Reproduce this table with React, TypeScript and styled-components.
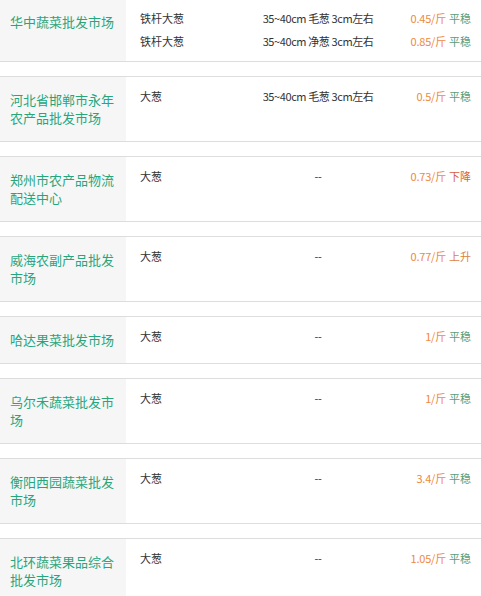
import styled, { createGlobalStyle } from 'styled-components';

const GlobalStyle = createGlobalStyle`
  body {
    margin: 0;
    background: #fff;
    font-family: "Noto Sans CJK SC", sans-serif;
  }
`;

type Trend = 'flat' | 'down' | 'up';

interface Oferta {
  produto: string;
  spec: string;
  preco: string;
  trend: Trend;
}

interface Mercado {
  nome: string;
  ofertas: Oferta[];
}

const mercados: Mercado[] = [
  {
    nome: '华中蔬菜批发市场',
    ofertas: [
      { produto: '铁杆大葱', spec: '35~40cm 毛葱 3cm左右', preco: '0.45/斤', trend: 'flat' },
      { produto: '铁杆大葱', spec: '35~40cm 净葱 3cm左右', preco: '0.85/斤', trend: 'flat' },
    ],
  },
  {
    nome: '河北省邯郸市永年农产品批发市场',
    ofertas: [{ produto: '大葱', spec: '35~40cm 毛葱 3cm左右', preco: '0.5/斤', trend: 'flat' }],
  },
  {
    nome: '郑州市农产品物流配送中心',
    ofertas: [{ produto: '大葱', spec: '--', preco: '0.73/斤', trend: 'down' }],
  },
  {
    nome: '威海农副产品批发市场',
    ofertas: [{ produto: '大葱', spec: '--', preco: '0.77/斤', trend: 'up' }],
  },
  {
    nome: '哈达果菜批发市场',
    ofertas: [{ produto: '大葱', spec: '--', preco: '1/斤', trend: 'flat' }],
  },
  {
    nome: '乌尔禾蔬菜批发市场',
    ofertas: [{ produto: '大葱', spec: '--', preco: '1/斤', trend: 'flat' }],
  },
  {
    nome: '衡阳西园蔬菜批发市场',
    ofertas: [{ produto: '大葱', spec: '--', preco: '3.4/斤', trend: 'flat' }],
  },
  {
    nome: '北环蔬菜果品综合批发市场',
    ofertas: [{ produto: '大葱', spec: '--', preco: '1.05/斤', trend: 'flat' }],
  },
];

const trendLabel: Record<Trend, string> = { flat: '平稳', down: '下降', up: '上升' };
const trendColor: Record<Trend, string> = { flat: '#5c9c7b', down: '#d9603f', up: '#df7f3c' };

const Lista = styled.div`
  margin-top: -2px;
  display: flex;
  flex-direction: column;
  gap: 14px;
`;

const Cartao = styled.div`
  display: flex;
  align-items: flex-start;
  border-top: 1px solid #dddddd;
  border-bottom: 1px solid #dddddd;
`;

const Nome = styled.div`
  width: 126px;
  flex-shrink: 0;
  align-self: stretch;
  box-sizing: border-box;
  padding: 14px 8px 14px 10px;
  background: #f6f6f6;
  color: #27a67c;
  font-size: 13px;
  line-height: 18px;
`;

const Ofertas = styled.div`
  flex: 1;
  padding: 8px 10px 8px 14px;
`;

const Linha = styled.div`
  display: grid;
  grid-template-columns: 88px 180px 1fr;
  height: 23px;
  line-height: 23px;
  font-size: 11px;
  color: #333;
  white-space: nowrap;
  overflow: hidden;
`;

const Spec = styled.span`
  text-align: center;
  letter-spacing: -0.4px;
`;

const Preco = styled.span`
  text-align: right;
  color: #f0883c;
  letter-spacing: -0.2px;
`;

const Tendencia = styled.span<{ $trend: Trend }>`
  margin-left: 3px;
  letter-spacing: 0;
  color: ${(p) => trendColor[p.$trend]};
`;

export default function App() {
  return (
    <>
      <GlobalStyle />
      <Lista>
        {mercados.map((m, i) => (
          <Cartao key={i}>
            <Nome>{m.nome}</Nome>
            <Ofertas>
              {m.ofertas.map((o, j) => (
                <Linha key={j}>
                  <span>{o.produto}</span>
                  <Spec>{o.spec}</Spec>
                  <Preco>
                    {o.preco}
                    <Tendencia $trend={o.trend}>{trendLabel[o.trend]}</Tendencia>
                  </Preco>
                </Linha>
              ))}
            </Ofertas>
          </Cartao>
        ))}
      </Lista>
    </>
  );
}
